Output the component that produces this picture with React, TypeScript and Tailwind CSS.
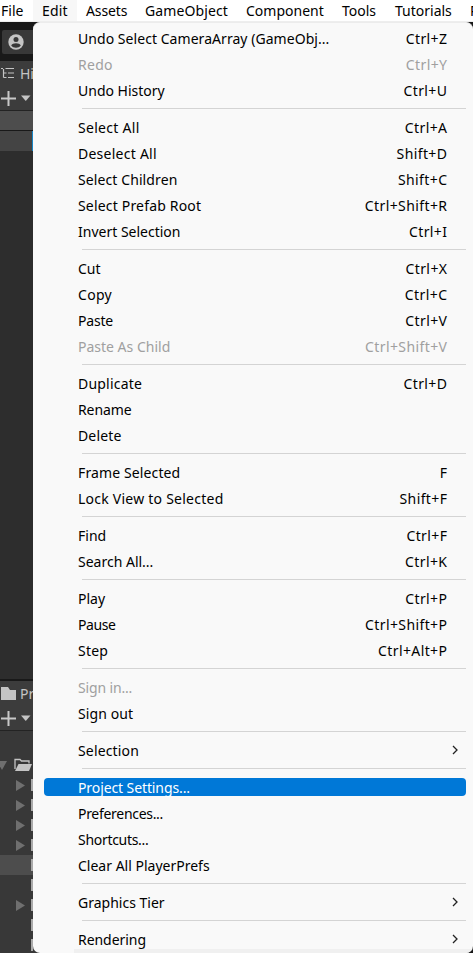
import React from "react";

type Item = {
  label: string;
  keys?: string;
  track?: string;
  disabled?: boolean;
  submenu?: boolean;
  active?: boolean;
};

const groups: Item[][] = [
  [
    { label: "Undo Select CameraArray (GameObj...", keys: "Ctrl+Z", track: "tracking-[0.05px]" },
    { label: "Redo", keys: "Ctrl+Y", disabled: true, track: "tracking-[0.3px]" },
    { label: "Undo History", keys: "Ctrl+U" },
  ],
  [
    { label: "Select All", keys: "Ctrl+A", track: "tracking-[0.3px]" },
    { label: "Deselect All", keys: "Shift+D", track: "tracking-[0.25px]" },
    { label: "Select Children", keys: "Shift+C", track: "tracking-[0.1px]" },
    { label: "Select Prefab Root", keys: "Ctrl+Shift+R", track: "tracking-[0.18px]" },
    { label: "Invert Selection", keys: "Ctrl+I" },
  ],
  [
    { label: "Cut", keys: "Ctrl+X" },
    { label: "Copy", keys: "Ctrl+C", track: "tracking-[0.3px]" },
    { label: "Paste", keys: "Ctrl+V", track: "tracking-[-0.2px]" },
    { label: "Paste As Child", keys: "Ctrl+Shift+V", disabled: true },
  ],
  [
    { label: "Duplicate", keys: "Ctrl+D", track: "tracking-[0.2px]" },
    { label: "Rename", track: "tracking-[-0.1px]" },
    { label: "Delete", track: "tracking-[0.15px]" },
  ],
  [
    { label: "Frame Selected", keys: "F", track: "tracking-[0.12px]" },
    { label: "Lock View to Selected", keys: "Shift+F", track: "tracking-[0.24px]" },
  ],
  [
    { label: "Find", keys: "Ctrl+F" },
    { label: "Search All...", keys: "Ctrl+K" },
  ],
  [
    { label: "Play", keys: "Ctrl+P" },
    { label: "Pause", keys: "Ctrl+Shift+P", track: "tracking-[-0.4px]" },
    { label: "Step", keys: "Ctrl+Alt+P", track: "tracking-[0.2px]" },
  ],
  [
    { label: "Sign in...", disabled: true, track: "tracking-[-0.15px]" },
    { label: "Sign out", track: "tracking-[0.1px]" },
  ],
  [{ label: "Selection", submenu: true, track: "tracking-[0.15px]" }],
  [
    { label: "Project Settings...", active: true, track: "tracking-[-0.1px]" },
    { label: "Preferences...", track: "tracking-[-0.3px]" },
    { label: "Shortcuts...", track: "tracking-[-0.3px]" },
    { label: "Clear All PlayerPrefs" },
  ],
  [{ label: "Graphics Tier", submenu: true }],
  [{ label: "Rendering", submenu: true, track: "tracking-[-0.05px]" }],
];

const menus = [
  { label: "File", box: "w-[33px] pl-px" },
  { label: "Edit", box: "w-11 pl-[9px] bg-[#f7f7f7] tracking-[0.2px]" },
  { label: "Assets", box: "w-[59px] pl-[9px] tracking-[-0.1px]" },
  { label: "GameObject", box: "w-[101px] pl-[9px] tracking-[0.1px]" },
  { label: "Component", box: "w-24 pl-[9px]" },
  { label: "Tools", box: "w-[53px] pl-[9px]" },
  { label: "Tutorials", box: "w-[75px] pl-[9px]" },
  { label: "P", box: "w-[12px] pl-[9px]" },
];

function MenuRow({ item }: { item: Item }) {
  const tone = item.active ? "text-white" : item.disabled ? "text-[#a0a0a0]" : "text-black";
  return (
    <div className="flex h-[26px] items-start pl-[11px] pr-[7px] pt-[3px]">
      <div
        className={`flex h-[18px] w-full items-center rounded-[4px] pl-[34px] whitespace-nowrap ${tone} ${
          item.active ? "bg-[#0078d7]" : ""
        }`}
      >
        <span className={`flex-1 pt-0.5 leading-5 ${item.track ?? ""}`}>{item.label}</span>
        {item.keys && <span className="mr-[18.600px] pt-0.5 leading-5 tracking-[0.4px]">{item.keys}</span>}
        {item.submenu && (
          <svg className="mr-2" width="6" height="10" viewBox="0 0 6 10" fill="none" stroke="#222" strokeWidth="1.3">
            <path d="M1 1l4 4-4 4" />
          </svg>
        )}
      </div>
    </div>
  );
}

function PlusTools() {
  return (
    <div className="flex h-[26px] items-center border-b border-[#232323] bg-[#3c3c3c]">
      <svg width="33" height="20" viewBox="0 0 33 20">
        <path d="M1 10.500h15M8.500 3v15" stroke="#c8c8c8" strokeWidth="2" />
        <path d="M21 7.500h9.500l-4.750 5.500z" fill="#c4c4c4" />
      </svg>
    </div>
  );
}

function Arrow() {
  return (
    <svg className="ml-4" width="9" height="11" viewBox="0 0 9 11">
      <path d="M0 0l9 5.500-9 5.500z" fill="#6f6f6f" />
    </svg>
  );
}

const tree = [true, true, true, true, false, false, true, false, false];

function Editor() {
  return (
    <div className="h-[931px] w-full bg-[#191919] pt-2 text-[#c4c4c4]">
      <div className="w-[37px] overflow-hidden">
        <div className="ml-0.5 flex h-[24px] items-center rounded-l-[2px] bg-[#383838] pl-[6px]">
          <svg width="16" height="16" viewBox="0 0 16 16">
            <circle cx="8" cy="8" r="7.700" fill="#c4c4c4" />
            <circle cx="8" cy="5.400" r="2.500" fill="#383838" />
            <path d="M3.200 11.400c1.300-3 8.300-3 9.600 0-2.200 3-7.400 3-9.600 0z" fill="#383838" />
          </svg>
        </div>
        <div className="mt-[7px] flex h-6 items-center bg-[#3c3c3c] pl-px text-[14px]">
          <svg className="shrink-0" width="14" height="12" viewBox="0 0 14 12" stroke="#c4c4c4" fill="none">
            <path d="M0 1.500h2M4.500 1.500H13M7 6h6M7 10.500h6M2.500 2v8.500M2.500 6h3M2.500 10.500h3" strokeWidth="1.2" />
          </svg>
          <span className="ml-[5px] pt-px leading-5">Hi</span>
        </div>
        <PlusTools />
        <div className="h-[19px] bg-[#4d4d4d]" />
        <div className="mt-px flex h-5 bg-[#444444]">
          <div className="ml-8 w-px bg-[#1685c5]" />
        </div>
        <div className="h-[528px] bg-[#2d2d2d]" />
        <div className="mt-[2px] flex h-6 items-center bg-[#3c3c3c] pl-px text-[14px]">
          <svg className="shrink-0" width="15" height="13" viewBox="0 0 15 13">
            <path d="M0 0h7l2 3h6v10H0z" fill="#c4c4c4" />
          </svg>
          <span className="ml-1 pt-px leading-5">Pr</span>
        </div>
        <PlusTools />
        <div className="h-[222px] bg-[#383838] pt-6">
          <div className="flex h-5 items-center">
            <svg width="33" height="16" viewBox="0 0 33 16">
              <path d="M-3 4H7L2 13z" fill="#6f6f6f" />
              <path d="M15 12V2.500h5l1.500 1.500H29v2.500" fill="none" stroke="#c4c4c4" strokeWidth="1.3" />
              <path d="M18.500 7H32l-3 7H15z" fill="#c4c4c4" />
            </svg>
          </div>
          {tree.map((open, i) => (
            <div key={i} className={`flex h-5 w-[33px] items-center justify-between ${i === 4 ? "bg-[#4d4d4d]" : ""}`}>
              {open ? <Arrow /> : <span />}
              <span className="h-3 w-[2px] bg-[#aaaaaa]" />
            </div>
          ))}
        </div>
      </div>
    </div>
  );
}

export default function App() {
  return (
    <div className="relative h-[953px] w-[473px] overflow-hidden bg-[#191919] font-['Noto_Sans','Open_Sans',sans-serif] text-[14px]">
      <nav className="flex h-[22px] border-b border-[#eeeeee] bg-white text-black">
        {menus.map((m) => (
          <div key={m.label} className={`shrink-0 whitespace-nowrap leading-[21px] ${m.box}`}>
            {m.label}
          </div>
        ))}
      </nav>
      <Editor />
      <div className="absolute top-[22px] left-[33px] h-[931px] w-[440px] overflow-hidden rounded-[7px] border-t border-[#ececec] bg-[#f9f9f9] pt-[3px]">
        {groups.map((g, i) => (
          <React.Fragment key={i}>
            {i > 0 && <div className="mt-1 mr-[7px] mb-1.5 ml-[49px] h-px bg-[#d4d4d4]" />}
            {g.map((item) => (
              <MenuRow key={item.label} item={item} />
            ))}
          </React.Fragment>
        ))}
        <div className="absolute right-0 bottom-0 left-[41px] h-1 bg-[#f0f0f0]" />
      </div>
    </div>
  );
}
